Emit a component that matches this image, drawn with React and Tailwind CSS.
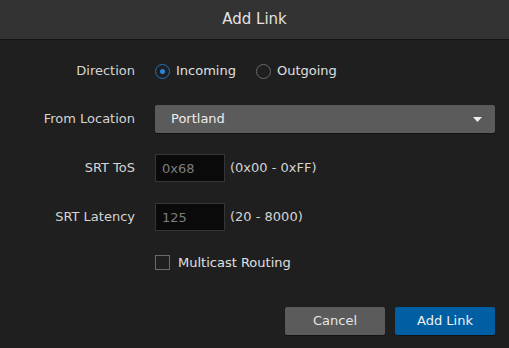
import { useState } from "react";

function Row({ label, children, className = "" }) {
  return (
    <div className={`flex items-center ${className}`}>
      <div className="w-[135px] shrink-0 text-right text-[#d4d4d4]">{label}</div>
      <div className="ml-[20px] flex flex-1 items-center">{children}</div>
    </div>
  );
}

function Radio({ checked, label, onClick }) {
  return (
    <button type="button" onClick={onClick} className="flex items-center gap-[6px] text-[#e0e0e0]">
      <span
        className={`flex h-[15px] w-[15px] items-center justify-center rounded-full border-[1.5px] ${
          checked ? "border-[#1c74c4]" : "border-[#6a6a6a]"
        }`}
      >
        {checked && <span className="h-[5px] w-[5px] rounded-full bg-[#2a86dc]" />}
      </span>
      {label}
    </button>
  );
}

export default function App() {
  const [direction, setDirection] = useState("incoming");
  const [multicast, setMulticast] = useState(false);

  return (
    <div
      className="flex h-[348px] w-[509px] flex-col bg-[#1f1f1f] text-[13px]"
      style={{ fontFamily: "'DejaVu Sans', 'Noto Sans', sans-serif" }}
    >
      <div className="flex h-[40px] items-center justify-center border-b border-[#151515] bg-[#333333] text-[15px] text-[#e2e2e2]">
        Add Link
      </div>

      <div className="flex flex-col pr-[14px]">
        {/* Direction */}
        <Row label="Direction" className="mt-[20px] h-[22px]">
          <Radio checked={direction === "incoming"} label="Incoming" onClick={() => setDirection("incoming")} />
          <div className="ml-[20px]">
            <Radio checked={direction === "outgoing"} label="Outgoing" onClick={() => setDirection("outgoing")} />
          </div>
        </Row>

        {/* From Location */}
        <Row label="From Location" className="mt-[23px]">
          <div className="flex h-[28px] w-full items-center justify-between rounded-[2px] bg-[#5b5b5b] pl-[16px] pr-[13px] text-[#ececec] shadow-[0_1px_1px_rgba(0,0,0,0.4)]">
            Portland
            <svg width="9" height="5" viewBox="0 0 9 5">
              <path d="M0 0h9L4.5 5z" fill="#f0f0f0" />
            </svg>
          </div>
        </Row>

        {/* SRT ToS */}
        <Row label="SRT ToS" className="mt-[21px]">
          <input
            defaultValue="0x68"
            className="h-[28px] w-[70px] border border-[#353535] bg-[#0a0a0a] px-[6px] text-[#7d7d7d] outline-none"
          />
          <span className="ml-[5px] text-[#d4d4d4]">(0x00 - 0xFF)</span>
        </Row>

        {/* SRT Latency */}
        <Row label="SRT Latency" className="mt-[21px]">
          <input
            defaultValue="125"
            className="h-[28px] w-[70px] border border-[#353535] bg-[#0a0a0a] px-[6px] text-[#7d7d7d] outline-none"
          />
          <span className="ml-[5px] text-[#d4d4d4]">(20 - 8000)</span>
        </Row>

        {/* Multicast */}
        <Row label="" className="mt-[22px]">
          <button type="button" onClick={() => setMulticast(!multicast)} className="flex items-center gap-[8px] text-[#e0e0e0]">
            <span className="flex h-[15px] w-[15px] items-center justify-center border-[1.5px] border-[#6a6a6a]">
              {multicast && <span className="h-[7px] w-[7px] bg-[#2a86dc]" />}
            </span>
            Multicast Routing
          </button>
        </Row>
      </div>

      <div className="mt-auto mb-[13px] flex justify-end gap-[10px] pr-[14px]">
        <button className="h-[28px] w-[100px] rounded-[2px] bg-[#5b5b5b] text-[#e6e6e6] shadow-[0_1px_1px_rgba(0,0,0,0.4)]">
          Cancel
        </button>
        <button className="h-[28px] w-[100px] rounded-[2px] bg-[#005fa3] text-[#f0f0f0] shadow-[0_1px_1px_rgba(0,0,0,0.4)]">
          Add Link
        </button>
      </div>
    </div>
  );
}
